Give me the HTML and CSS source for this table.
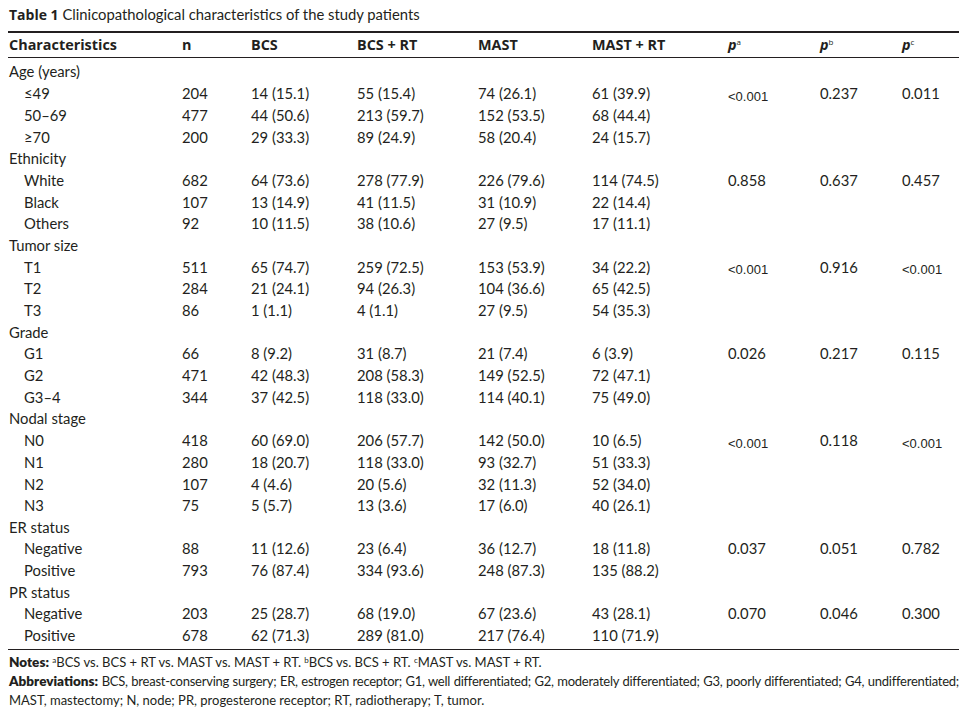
FILE: index.html
```html
<!DOCTYPE html>
<html>
<head>
<meta charset="utf-8">
<link rel="stylesheet" href="styles.css">
</head>
<body>
<div class="page">
  <div class="caption"><b>Table 1</b> Clinicopathological characteristics of the study patients</div>
  <table class="tbl">
    <colgroup>
      <col class="c1"><col class="c2"><col class="c3"><col class="c4"><col class="c5"><col class="c6"><col class="c7"><col class="c8"><col class="c9">
    </colgroup>
    <thead>
      <tr>
        <th>Characteristics</th><th>n</th><th>BCS</th><th>BCS + RT</th><th>MAST</th><th>MAST + RT</th>
        <th><i>P</i><sup>a</sup></th><th><i>P</i><sup>b</sup></th><th><i>P</i><sup>c</sup></th>
      </tr>
    </thead>
    <tbody>
      <tr class="first"><td>Age (years)</td><td></td><td></td><td></td><td></td><td></td><td></td><td></td><td></td></tr>
      <tr><td class="sub">≤49</td><td>204</td><td>14 (15.1)</td><td>55 (15.4)</td><td>74 (26.1)</td><td>61 (39.9)</td><td><span class="lt">&lt;0.001</span></td><td>0.237</td><td>0.011</td></tr>
      <tr><td class="sub">50–69</td><td>477</td><td>44 (50.6)</td><td>213 (59.7)</td><td>152 (53.5)</td><td>68 (44.4)</td><td></td><td></td><td></td></tr>
      <tr><td class="sub">≥70</td><td>200</td><td>29 (33.3)</td><td>89 (24.9)</td><td>58 (20.4)</td><td>24 (15.7)</td><td></td><td></td><td></td></tr>
      <tr><td>Ethnicity</td><td></td><td></td><td></td><td></td><td></td><td></td><td></td><td></td></tr>
      <tr><td class="sub">White</td><td>682</td><td>64 (73.6)</td><td>278 (77.9)</td><td>226 (79.6)</td><td>114 (74.5)</td><td>0.858</td><td>0.637</td><td>0.457</td></tr>
      <tr><td class="sub">Black</td><td>107</td><td>13 (14.9)</td><td>41 (11.5)</td><td>31 (10.9)</td><td>22 (14.4)</td><td></td><td></td><td></td></tr>
      <tr><td class="sub">Others</td><td>92</td><td>10 (11.5)</td><td>38 (10.6)</td><td>27 (9.5)</td><td>17 (11.1)</td><td></td><td></td><td></td></tr>
      <tr><td>Tumor size</td><td></td><td></td><td></td><td></td><td></td><td></td><td></td><td></td></tr>
      <tr><td class="sub">T1</td><td>511</td><td>65 (74.7)</td><td>259 (72.5)</td><td>153 (53.9)</td><td>34 (22.2)</td><td><span class="lt">&lt;0.001</span></td><td>0.916</td><td><span class="lt">&lt;0.001</span></td></tr>
      <tr><td class="sub">T2</td><td>284</td><td>21 (24.1)</td><td>94 (26.3)</td><td>104 (36.6)</td><td>65 (42.5)</td><td></td><td></td><td></td></tr>
      <tr><td class="sub">T3</td><td>86</td><td>1 (1.1)</td><td>4 (1.1)</td><td>27 (9.5)</td><td>54 (35.3)</td><td></td><td></td><td></td></tr>
      <tr><td>Grade</td><td></td><td></td><td></td><td></td><td></td><td></td><td></td><td></td></tr>
      <tr><td class="sub">G1</td><td>66</td><td>8 (9.2)</td><td>31 (8.7)</td><td>21 (7.4)</td><td>6 (3.9)</td><td>0.026</td><td>0.217</td><td>0.115</td></tr>
      <tr><td class="sub">G2</td><td>471</td><td>42 (48.3)</td><td>208 (58.3)</td><td>149 (52.5)</td><td>72 (47.1)</td><td></td><td></td><td></td></tr>
      <tr><td class="sub">G3–4</td><td>344</td><td>37 (42.5)</td><td>118 (33.0)</td><td>114 (40.1)</td><td>75 (49.0)</td><td></td><td></td><td></td></tr>
      <tr><td>Nodal stage</td><td></td><td></td><td></td><td></td><td></td><td></td><td></td><td></td></tr>
      <tr><td class="sub">N0</td><td>418</td><td>60 (69.0)</td><td>206 (57.7)</td><td>142 (50.0)</td><td>10 (6.5)</td><td><span class="lt">&lt;0.001</span></td><td>0.118</td><td><span class="lt">&lt;0.001</span></td></tr>
      <tr><td class="sub">N1</td><td>280</td><td>18 (20.7)</td><td>118 (33.0)</td><td>93 (32.7)</td><td>51 (33.3)</td><td></td><td></td><td></td></tr>
      <tr><td class="sub">N2</td><td>107</td><td>4 (4.6)</td><td>20 (5.6)</td><td>32 (11.3)</td><td>52 (34.0)</td><td></td><td></td><td></td></tr>
      <tr><td class="sub">N3</td><td>75</td><td>5 (5.7)</td><td>13 (3.6)</td><td>17 (6.0)</td><td>40 (26.1)</td><td></td><td></td><td></td></tr>
      <tr><td>ER status</td><td></td><td></td><td></td><td></td><td></td><td></td><td></td><td></td></tr>
      <tr><td class="sub">Negative</td><td>88</td><td>11 (12.6)</td><td>23 (6.4)</td><td>36 (12.7)</td><td>18 (11.8)</td><td>0.037</td><td>0.051</td><td>0.782</td></tr>
      <tr><td class="sub">Positive</td><td>793</td><td>76 (87.4)</td><td>334 (93.6)</td><td>248 (87.3)</td><td>135 (88.2)</td><td></td><td></td><td></td></tr>
      <tr><td>PR status</td><td></td><td></td><td></td><td></td><td></td><td></td><td></td><td></td></tr>
      <tr><td class="sub">Negative</td><td>203</td><td>25 (28.7)</td><td>68 (19.0)</td><td>67 (23.6)</td><td>43 (28.1)</td><td>0.070</td><td>0.046</td><td>0.300</td></tr>
      <tr class="last"><td class="sub">Positive</td><td>678</td><td>62 (71.3)</td><td>289 (81.0)</td><td>217 (76.4)</td><td>110 (71.9)</td><td></td><td></td><td></td></tr>
    </tbody>
  </table>
  <div class="notes">
    <p><b>Notes:</b> <sup>a</sup>BCS vs. BCS + RT vs. MAST vs. MAST + RT. <sup>b</sup>BCS vs. BCS + RT. <sup>c</sup>MAST vs. MAST + RT.</p>
    <p class="abbr"><b>Abbreviations:</b> BCS, breast-conserving surgery; ER, estrogen receptor; G1, well differentiated; G2, moderately differentiated; G3, poorly differentiated; G4, undifferentiated;</p>
    <p>MAST, mastectomy; N, node; PR, progesterone receptor; RT, radiotherapy; T, tumor.</p>
  </div>
</div>
</body>
</html>
```

FILE: styles.css
```css
html, body {
  margin: 0;
  padding: 0;
  background: #ffffff;
}

body {
  font-family: "Lato", "Open Sans", sans-serif;
  color: #231f20;
}

.page {
  padding: 6px 8px 0 8px;
}

.caption {
  font-size: 14.8px;
  line-height: 17px;
  padding-left: 1px;
  margin-bottom: 8px;
}

.caption b {
  font-family: "Open Sans", sans-serif;
  font-size: 14px;
}

.tbl {
  width: 951px;
  border-collapse: collapse;
  table-layout: fixed;
  font-size: 14.8px;
}

.c1 { width: 173px; }
.c2 { width: 69px; }
.c3 { width: 106px; }
.c4 { width: 121px; }
.c5 { width: 114px; }
.c6 { width: 136px; }
.c7 { width: 92px; }
.c8 { width: 82px; }
.c9 { width: 58px; }

.tbl thead th {
  text-align: left;
  font-family: "Open Sans", sans-serif;
  font-size: 14.4px;
  font-weight: bold;
  padding: 0 0 0 1px;
  height: 24px;
  line-height: 24px;
  border-top: 2px solid #231f20;
  border-bottom: 1px solid #231f20;
  white-space: nowrap;
}

.tbl thead th i {
  font-style: italic;
  font-weight: bold;
  text-transform: lowercase;
}

.tbl sup {
  font-size: 8px;
  line-height: 0;
  vertical-align: 5px;
  font-weight: normal;
}

.tbl td {
  padding: 0 0 0 1px;
  height: 21.65px;
  line-height: 21px;
  white-space: nowrap;
}

.tbl tr.first td {
  padding-top: 3px;
}

.tbl tr.last td {
  padding-bottom: 3px;
  border-bottom: 1px solid #231f20;
}

.tbl td.sub {
  padding-left: 16px;
}

.lt {
  font-family: "Liberation Sans", Arial, sans-serif;
  font-size: 13px;
  position: relative;
  top: 2px;
}

.notes {
  font-size: 13px;
  line-height: 19px;
  padding: 3px 0 0 1px;
  width: 950px;
}

.notes p {
  margin: 0;
  white-space: nowrap;
}

.notes b {
  font-weight: 800;
  font-size: 13.5px;
  letter-spacing: 0;
}

.notes p.abbr {
  text-align: justify;
  text-align-last: justify;
  letter-spacing: -0.25px;
  white-space: normal;
}

.notes sup {
  font-size: 8px;
  line-height: 0;
  vertical-align: 4px;
}
```
